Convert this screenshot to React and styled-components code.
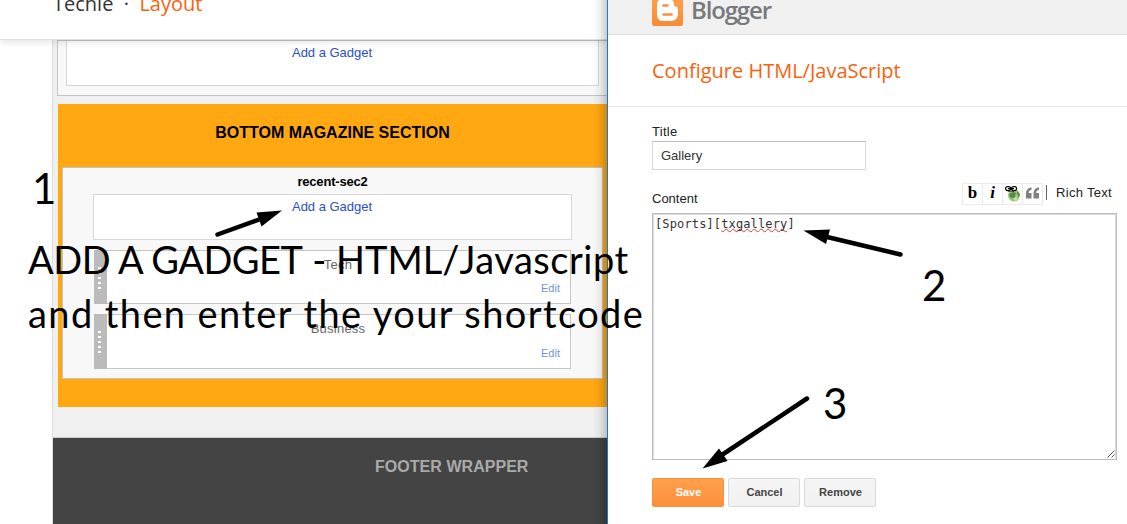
import React from "react";
import styled, { createGlobalStyle } from "styled-components";

const Global = createGlobalStyle`
  * { box-sizing: border-box; }
  body { margin: 0; font-family: "Liberation Sans", Arial, sans-serif; font-size: 13px; color: #222; background: #fff; }
`;

const Screen = styled.div`
  position: relative;
  display: flex;
  width: 1127px;
  height: 524px;
  overflow: hidden;
`;

const LayoutPage = styled.main`
  position: relative;
  width: 607px;
  height: 524px;
  overflow: hidden;
  display: flex;
  flex-direction: column;
`;

const PopupShade = styled.div`
  position: absolute;
  top: 0;
  right: 0;
  bottom: 0;
  width: 14px;
  background: linear-gradient(to right, rgba(0, 0, 0, 0), rgba(0, 0, 0, 0.05) 45%, rgba(0, 0, 0, 0.2));
`;

const PageHeader = styled.header`
  position: relative;
  flex: none;
  height: 40px;
  padding-left: 53px;
  background: #fff;
  border-bottom: 1px solid #e2e2e2;
  box-shadow: 0 1px 8px rgba(0, 0, 0, 0.14);
  font-family: "Open Sans", sans-serif;
  font-size: 20px;
  line-height: 28px;
  white-space: pre;
`;

const Crumbs = styled.div`
  margin-top: -10px;
  color: #333;
`;

const Current = styled.span`
  color: #f9620c;
`;

const Canvas = styled.div`
  flex: 1;
  display: flex;
  flex-direction: column;
  margin-left: 52px;
  border-left: 1px solid #ddd;
  background: #f0f0f0;
`;

const UpperSection = styled.section`
  height: 56px;
  margin-left: 4px;
  padding: 0 8px 9px;
  background: #f8f8f8;
  border: solid #c4c4c4;
  border-width: 1px 0 1px 1px;
  display: flex;
`;

const AddBox = styled.div`
  width: ${(p) => p.$width}px;
  height: ${(p) => p.$height}px;
  padding: ${(p) => p.$top}px 1px 0 0;
  background: #fff;
  border: 1px solid #d8d8d8;
  border-top-width: ${(p) => (p.$open ? 0 : 1)}px;
  text-align: center;
  line-height: 16px;
  letter-spacing: -0.02px;
  color: #2a50c8;
`;

const Magazine = styled.section`
  height: 303px;
  margin: 8px 0 0 5px;
  padding: 20px 4px 0;
  background: #ffa812;
`;

const SectionTitle = styled.h2`
  margin: 0 0 33px;
  width: 541px;
  height: 10px;
  line-height: 18px;
  font-size: 16px;
  text-align: center;
  color: #000;
`;

const Widgets = styled.div`
  width: 541px;
  height: 212px;
  padding: 6px 30px 0;
  background: #f8f8f8;
  border: 1px solid #c2c2c2;
`;

const WidgetsTitle = styled.h3`
  margin: 0;
  height: 20px;
  line-height: 16px;
  font-size: 13px;
  letter-spacing: -0.2px;
  text-align: center;
  color: #000;
`;

const Gadget = styled.div`
  display: flex;
  width: 477px;
  height: ${(p) => p.$height}px;
  margin: 10px 0 0 1px;
  background: #fff;
  border: 1px solid #c6c6c6;
  border-left: 0;
`;

const Handle = styled.div`
  flex: none;
  width: 13px;
  margin: -1px 0;
  padding: 17px 0 0 4px;
  background: #bbb;
  display: flex;
  flex-direction: column;
  gap: 3px;
`;

const Dot = styled.i`
  width: 3px;
  height: 2px;
  background: #fff;
`;

const GadgetBody = styled.div`
  flex: 1;
  display: flex;
  flex-direction: column;
  justify-content: space-between;
  padding: 6px 10px 8px 0;
`;

const GadgetName = styled.div`
  padding-left: 9px;
  text-align: center;
  line-height: 16px;
  letter-spacing: 0.25px;
  color: #666;
`;

const Edit = styled.div`
  text-align: right;
  font-size: 11px;
  line-height: 14px;
  color: #7394d0;
`;

const Footer = styled.footer`
  height: 87px;
  margin-top: 30px;
  padding: 20px 0 0 322px;
  border-top: 1px solid #ccc;
  background: #444;
  color: #aaa;
  font-size: 16px;
  font-weight: bold;
  line-height: 18px;
  letter-spacing: 0.04px;
  white-space: nowrap;
`;

const Popup = styled.section`
  width: 520px;
  height: 524px;
  border-left: 1px solid #1979ca;
  background: #fff;
`;

const Brand = styled.header`
  display: flex;
  height: 35px;
  padding-left: 44px;
  overflow: hidden;
  background: #f0f0f0;
  border-bottom: 1px solid #ddd;
`;

const BrandName = styled.span`
  margin: -8px 0 0 8px;
  font: 600 24px/36px "Open Sans", sans-serif;
  letter-spacing: -1.15px;
  color: #77797c;
`;

const PopupTitle = styled.h1`
  margin: 0;
  height: 72px;
  padding-left: 44px;
  border-bottom: 1px solid #e8e8e8;
  font: 400 20px/71px "Open Sans", sans-serif;
  color: #f9620c;
`;

const Form = styled.div`
  display: flex;
  flex-direction: column;
  padding: 17px 10px 0 44px;
`;

const Label = styled.label`
  line-height: 16px;
  letter-spacing: ${(p) => p.$track || 0}px;
  color: #222;
`;

const TitleInput = styled.div`
  width: 214px;
  height: 29px;
  margin: 1px 0 12px;
  padding-left: 8px;
  border: 1px solid #d9d9d9;
  border-top-color: #bbb;
  line-height: 28px;
  color: #333;
`;

const ContentBar = styled.div`
  display: flex;
  justify-content: space-between;
  height: 31px;
  padding: 9px 5px 0 0;
`;

const Toolbar = styled.div`
  display: flex;
  margin-top: -8px;
  height: 22px;
`;

const Tool = styled.span`
  display: flex;
  align-items: center;
  justify-content: center;
  width: ${(p) => (p.$first ? 21 : 20)}px;
  height: 22px;
  border: 1px solid #ececec;
  border-left-width: ${(p) => (p.$first ? 1 : 0)}px;
  font: ${(p) => (p.$italic ? "italic " : "")}bold 17px/20px "Liberation Serif", serif;
  padding-bottom: ${(p) => p.$raise || 0}px;
  color: #000;
`;

const RichText = styled.span`
  height: 15px;
  margin: 2px 0 0 3px;
  padding-left: 9px;
  border-left: 1px solid #666;
  line-height: 15px;
  letter-spacing: 0.3px;
  color: #222;
`;

const Editor = styled.div`
  position: relative;
  width: 465px;
  height: 247px;
  padding: 2px 0 0 2px;
  border: 1px solid #bbb;
  box-shadow: inset 0 1px 0 #ddd, inset -1px 0 0 #ddd, inset 1px 0 0 #ddd;
  font: 12px/16px "DejaVu Sans Mono", monospace;
  letter-spacing: 0.13px;
  color: #333;
`;

const Misspelled = styled.span`
  text-decoration: underline wavy #e33 1px;
  text-decoration-skip-ink: none;
  text-underline-offset: 0;
`;

const Grip = styled.svg`
  position: absolute;
  right: 1px;
  bottom: 1px;
`;

const Buttons = styled.div`
  display: flex;
  gap: 4px;
  margin-top: 18px;
`;

const Button = styled.button`
  width: 72px;
  height: 29px;
  padding: 0 0 1px 1px;
  border: 1px solid ${(p) => (p.$primary ? "#fb8f3d" : "#d9d9d9")};
  border-radius: 2px;
  background: ${(p) => (p.$primary ? "linear-gradient(#ffa04c, #fd8f3c)" : "linear-gradient(#f5f5f5, #f1f1f1)")};
  font: bold 11px/24px "Liberation Sans", Arial, sans-serif;
  color: ${(p) => (p.$primary ? "#fff" : "#444")};
`;

const Note = styled.div`
  position: absolute;
  left: ${(p) => p.$x}px;
  top: ${(p) => p.$y}px;
  font: 400 ${(p) => p.$size || 38}px/54px Lato, sans-serif;
  letter-spacing: ${(p) => p.$track || 0}px;
  white-space: pre;
  color: #000;
`;

const Run = styled.span`
  letter-spacing: ${(p) => p.$track}px;
`;

const Arrows = styled.svg`
  position: absolute;
  left: 0;
  top: 0;
`;

function BloggerMark() {
  return (
    <svg width="31" height="26" viewBox="0 0 31 26">
      <defs>
        <linearGradient id="mark" x1="0" y1="0" x2="0" y2="1">
          <stop offset="0" stopColor="#ffa24e" />
          <stop offset="1" stopColor="#fb8a35" />
        </linearGradient>
      </defs>
      <rect y="-5" width="31" height="31" rx="2" fill="url(#mark)" />
      <path d="M11-1h5c4 0 6 2 6 5 0 2 .5 2.500 2 2.500s2 1 2 2.500v5c0 4-3 7-7 7h-8c-4 0-6-3-6-6V5c0-4 2-6 6-6z" fill="#fff" />
      <path d="M11.500 5.500h4M11.500 14.500h8" stroke="#fb8f3c" strokeWidth="2.600" strokeLinecap="round" />
    </svg>
  );
}

function LinkIcon() {
  return (
    <svg width="17" height="18" viewBox="0 0 17 18">
      <circle cx="10" cy="10.500" r="6" fill="#9bc774" />
      <path d="M5 9l4-2 3 1-1 3 1 2-2 1-4-2zM13 6l3 3-1 3-2-3z" fill="#5b8850" />
      <path d="M9 13l3-1 2 2-3 2z" fill="#c5dfaa" />
      <g fill="#fff" stroke="#000" strokeWidth="1.200">
        <rect x="1.600" y="1.600" width="5" height="4" rx="2" />
        <rect x="7.600" y="1.600" width="5" height="4" rx="2" />
        <path d="M4 3.600h6" />
        <path d="M4.500 6.500h5" strokeDasharray="1 1" />
      </g>
    </svg>
  );
}

function QuoteIcon() {
  return (
    <svg width="15" height="12" viewBox="0 0 15 12">
      <path d="M6.500 0.500C3 .5 1 3 1 7v4.500h5.500V6H3.700C3.700 4 4.700 3 6.500 3zM14 .5c-3.500 0-5.500 2.500-5.500 6.500v4.500H14V6h-2.800c0-2 1-3 2.800-3z" fill="#808080" />
    </svg>
  );
}

function GadgetRow({ name, height }) {
  return (
    <Gadget $height={height}>
      <Handle>{[0, 1, 2, 3, 4].map((n) => <Dot key={n} />)}</Handle>
      <GadgetBody>
        <GadgetName>{name}</GadgetName>
        <Edit>Edit</Edit>
      </GadgetBody>
    </Gadget>
  );
}

export default function App() {
  return (
    <Screen>
      <Global />
      <LayoutPage>
        <PageHeader>
          <Crumbs>Techie{"  ·  "}<Current>Layout</Current></Crumbs>
        </PageHeader>
        <Canvas>
          <UpperSection>
            <AddBox $width={533} $height={45} $top={4} $open>Add a Gadget</AddBox>
          </UpperSection>
          <Magazine>
            <SectionTitle>BOTTOM MAGAZINE SECTION</SectionTitle>
            <Widgets>
              <WidgetsTitle>recent-sec2</WidgetsTitle>
              <AddBox $width={479} $height={46} $top={4}>Add a Gadget</AddBox>
              <GadgetRow name="Tech" height={54} />
              <GadgetRow name="Business" height={55} />
            </Widgets>
          </Magazine>
          <Footer>FOOTER WRAPPER</Footer>
        </Canvas>
        <PopupShade />
      </LayoutPage>

      <Popup>
        <Brand>
          <BloggerMark />
          <BrandName>Blogger</BrandName>
        </Brand>
        <PopupTitle>Configure HTML/JavaScript</PopupTitle>
        <Form>
          <Label $track={0.3}>Title</Label>
          <TitleInput>Gallery</TitleInput>
          <ContentBar>
            <Label>Content</Label>
            <Toolbar>
              <Tool $first $raise={2}>b</Tool>
              <Tool $italic $raise={2}>i</Tool>
              <Tool><LinkIcon /></Tool>
              <Tool $raise={2}><QuoteIcon /></Tool>
              <RichText>Rich Text</RichText>
            </Toolbar>
          </ContentBar>
          <Editor>
            [Sports][<Misspelled>txgallery</Misspelled>]
            <Grip width="8" height="8" viewBox="0 0 8 8">
              <path d="M.5 7.500l7-7M4.500 7.500l3-3" stroke="#555" fill="none" />
            </Grip>
          </Editor>
          <Buttons>
            <Button $primary>Save</Button>
            <Button>Cancel</Button>
            <Button>Remove</Button>
          </Buttons>
        </Form>
      </Popup>

      <Note $x={32} $y={161} $size={42}>1</Note>
      <Note $x={28} $y={232}>
        <Run $track={-0.5}>ADD A GADGET</Run>
        <Run $track={0}>{" - HTML/"}</Run>
        <Run $track={0.5}>Javascript</Run>
      </Note>
      <Note $x={28} $y={286} $track={1.41}>and then enter the your shortcode</Note>
      <Note $x={922} $y={258} $size={42}>2</Note>
      <Note $x={823} $y={376} $size={42}>3</Note>
      <Arrows width="1127" height="524" viewBox="0 0 1127 524">
        <g stroke="#000" strokeWidth="4.500" strokeLinecap="round">
          <path d="M217.500 234.500L262 218.500" />
          <path d="M900.500 254.500L825 236.500" />
          <path d="M807 398.500L721 455.500" />
        </g>
        <path d="M282 210.500L256.500 212.500L261.500 226.500z" />
        <path d="M803.500 230.500L830 229.500L826 244z" />
        <path d="M702.500 468.500L719 448.500L727.500 461z" />
      </Arrows>
    </Screen>
  );
}
